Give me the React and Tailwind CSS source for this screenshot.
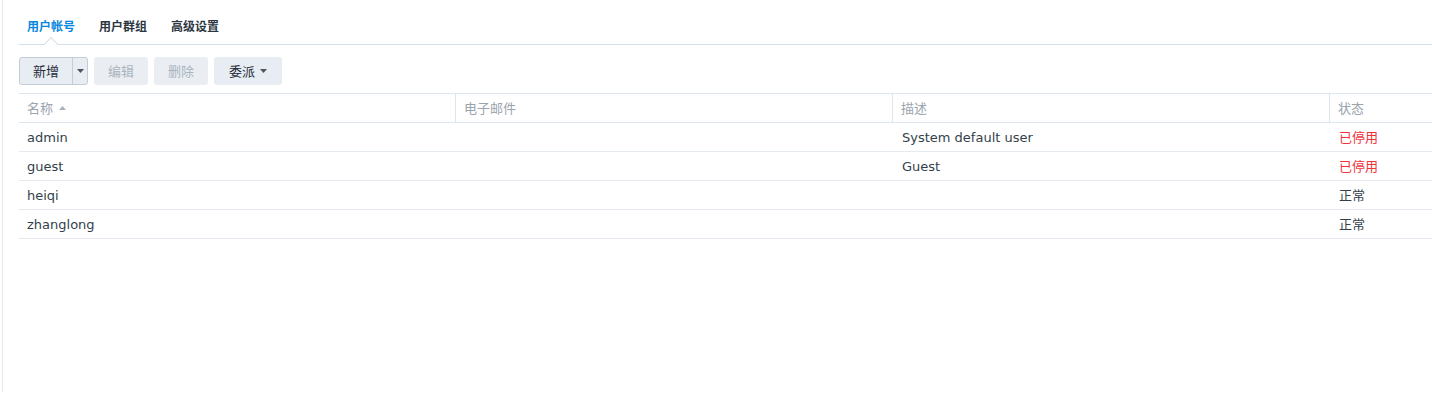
const font = { fontFamily: '"DejaVu Sans", "Noto Sans CJK SC", sans-serif' };

const rows = [
  { name: "admin", email: "", desc: "System default user", status: "已停用", off: true },
  { name: "guest", email: "", desc: "Guest", status: "已停用", off: true },
  { name: "heiqi", email: "", desc: "", status: "正常", off: false },
  { name: "zhanglong", email: "", desc: "", status: "正常", off: false },
];

function Caret({ className = "" }) {
  return (
    <svg width="7" height="4" viewBox="0 0 7 4" className={className}>
      <path d="M0 0h7L3.5 4z" fill="currentColor" />
    </svg>
  );
}

export default function App() {
  return (
    <div className="h-[394px] w-[1432px] bg-white overflow-hidden" style={font}>
      <div className="ml-[2px] h-[392px] border-l border-[#e2e8ef] pl-[16px]">
        {/* Tabs */}
        <div className="relative flex h-[45px] items-center border-b border-[#d6e0ea] pl-[8px] pt-[8px] text-[12px] font-bold font-['Noto_Sans_CJK_SC']">
          <span className="relative text-[#0a86e0]">
            用户帐号
            <span className="absolute left-1/2 top-[22px] -ml-[5px] h-[10px] w-[10px] rotate-45 border-l border-t border-[#d6e0ea] bg-white" />
          </span>
          <span className="ml-[24px] text-[#2c3642]">用户群组</span>
          <span className="ml-[24px] text-[#2c3642]">高级设置</span>
        </div>

        {/* Toolbar */}
        <div className="flex h-[48px] items-start gap-[6px] pt-[12px] text-[13px] font-['Noto_Sans_CJK_SC']">
          <div className="flex h-[28px] w-[69px] overflow-hidden rounded-[3px] border border-[#c4ccd6] bg-[#e8edf3] text-[#1f2b37]">
            <span className="flex w-[53px] items-center justify-center border-r border-[#c4ccd6]">新增</span>
            <span className="flex flex-1 items-center justify-center text-[#4a5561]">
              <Caret />
            </span>
          </div>
          <span className="flex h-[28px] w-[54px] items-center justify-center rounded-[3px] bg-[#eaeef3] text-[#a9b4bf]">编辑</span>
          <span className="flex h-[28px] w-[54px] items-center justify-center rounded-[3px] bg-[#eaeef3] text-[#a9b4bf]">删除</span>
          <span className="flex h-[28px] w-[68px] items-center justify-center gap-[5px] rounded-[3px] bg-[#e8edf3] text-[#1f2b37]">
            委派
            <Caret className="text-[#4a5561]" />
          </span>
        </div>

        {/* Table */}
        <div className="border-t border-[#dde5ee] text-[13px]">
          <div className="grid h-[29px] grid-cols-[437px_437px_437px_1fr] border-b border-[#dde5ee] text-[#9aa4ae] font-['Noto_Sans_CJK_SC']">
            <div className="flex items-center gap-[6px] border-r border-[#dde5ee] pl-[8px]">
              名称
              <Caret className="rotate-180 text-[#a9b2bb]" />
            </div>
            <div className="flex items-center border-r border-[#dde5ee] pl-[8px]">电子邮件</div>
            <div className="flex items-center border-r border-[#dde5ee] pl-[8px]">描述</div>
            <div className="flex items-center pl-[8px]">状态</div>
          </div>
          {rows.map((r) => (
            <div
              key={r.name}
              className="grid h-[29px] grid-cols-[437px_437px_437px_1fr] border-b border-[#e4eaf0] text-[#333f4b]"
            >
              <div className="flex items-center pl-[8px] pt-[2px]">{r.name}</div>
              <div className="flex items-center pl-[9px] pt-[2px]">{r.email}</div>
              <div className="flex items-center pl-[9px] pt-[2px]">{r.desc}</div>
              <div
                className={
                  "flex items-center pl-[9px] font-['Noto_Sans_CJK_SC'] " +
                  (r.off ? "text-[#f0323c]" : "text-[#333f4b]")
                }
              >
                {r.status}
              </div>
            </div>
          ))}
        </div>
      </div>
    </div>
  );
}
